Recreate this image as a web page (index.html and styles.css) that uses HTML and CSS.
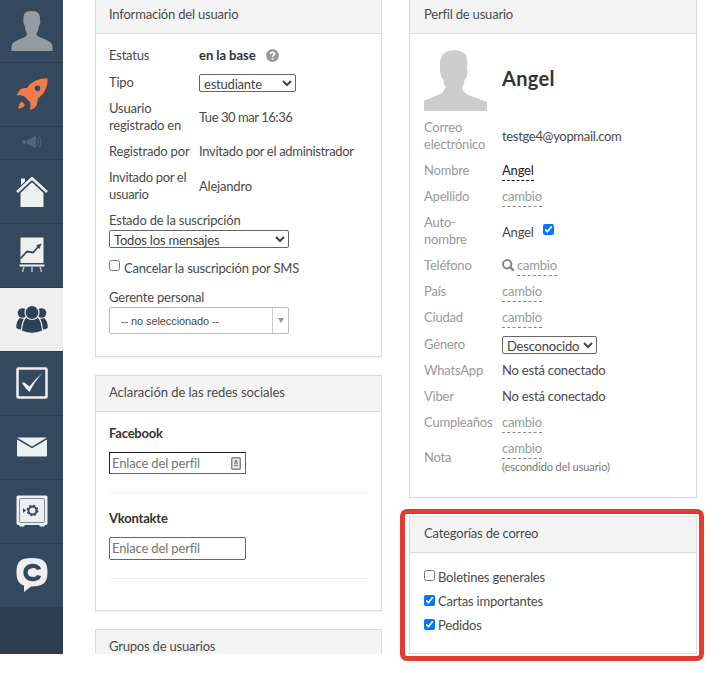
FILE: index.html
```html
<!DOCTYPE html>
<html lang="es">
<head>
<meta charset="utf-8">
<title>Perfil de usuario</title>
<link rel="stylesheet" href="styles.css">
</head>
<body>
<div class="page">
  <nav class="sidebar">
    <a class="item item-user"><svg width="42" height="42" viewBox="0 0 42 42"><path fill="#959ba2" d="M0.500 41V36C2 30 10 29.500 14 27C17 25 16 23 14.500 20.500L13.500 15C12 13 12 11 12.500 10C12 4 14 1 20 1C27 .5 29.500 4 29 10C30 12 29 14 28 16L27 21C25 24 25 25 28 27C33 29.500 40 30 41.500 36V41Z"/></svg></a>
    <a class="item item-rocket"><svg width="32" height="32" viewBox="0 0 32 32"><path fill="#f27c49" fill-rule="evenodd" d="M31.500.5C24 .2 16 2.500 11 10C7 9.500 4.500 10.500 3 13L.5 17.500C4 17 6 17 8.500 18.500L14 24C14.800 26 14.500 28 14 32C18 31 20.500 29 21 26L22 20.500C28.500 15.500 32 9 31.500.5ZM21.500 7.500a2.800 2.800 0 1 1 0 5.600a2.800 2.800 0 1 1 0-5.600Z"/><path fill="#f27c49" d="M6 23.500C3.500 25 2.500 27.500 2 30.500C5 30.500 7.500 29.500 9 27Z"/></svg></a>
    <a class="item item-horn"><svg width="22" height="14" viewBox="0 0 22 14"><g fill="#4f6780"><circle cx="3" cy="7" r="2"/><path d="M5.500 5.200 15 .8V13.200L5.500 8.800Z"/></g><path d="M16.500 3.500Q18.500 7 16.500 10.500M18.500 1.500Q21.500 7 18.500 12.500" fill="none" stroke="#4f6780"/></svg></a>
    <a class="item item-home"><svg width="32" height="32" viewBox="0 0 32 32"><path fill="#ecf0f1" d="M5 2.500H9V6L5 9.500ZM16 6.200 27.500 17V31H4.500V17Z"/><path d="M1 16 16 2.300 31 16" fill="none" stroke="#34495e" stroke-width="4.600"/><path d="M1 16 16 2.300 31 16" fill="none" stroke="#ecf0f1" stroke-width="2.600"/></svg></a>
    <a class="item"><svg width="26" height="36" viewBox="0 0 26 36"><path fill="#ecf0f1" d="M1.500.5H24.500V26H1.500ZM.5 27.500H25.500V29.500H.5Z"/><path d="M5 29.500 3.500 35M13 29.500V35M21 29.500 22.500 35" stroke="#aebbc6" stroke-width="1.500"/><path d="M1.500 21.500 8 14.500 14 15.500 20 9" fill="none" stroke="#34495e" stroke-width="1.800"/><path fill="#34495e" d="M17 8.500 22.500 6.500 20.500 12Z"/></svg></a>
    <a class="item item-active"><svg width="32" height="30" viewBox="0 0 32 30"><g fill="#2e4155"><circle cx="6.500" cy="9" r="4.800"/><circle cx="25.500" cy="9" r="4.800"/><path d="M4 14Q0 17 .3 24Q3 26 7 25.500L9 15Q6 15 4 14ZM28 14Q32 17 31.700 24Q29 26 25 25.500L23 15Q26 15 28 14Z"/></g><g fill="#2e4155" stroke="#efefef" stroke-width="1.200"><path d="M10 13Q16 17 22 13Q26 17 26.500 27Q16 31.500 5.500 27Q6 17 10 13Z"/><circle cx="16" cy="8.500" r="7"/></g></svg></a>
    <a class="item"><svg width="32" height="32" viewBox="0 0 32 32"><rect x="1.500" y="1.500" width="29" height="29" rx="1" fill="none" stroke="#ecf0f1" stroke-width="2.500"/><path fill="#ecf0f1" d="M6 16 8 15.300 13.500 19.500Q19 12 26.500 6Q19 14 13.500 25Q9 21 6 16Z"/></svg></a>
    <a class="item"><svg width="32" height="20" viewBox="0 0 32 20"><rect x="1" y=".5" width="30" height="19" rx="1" fill="#ecf0f1"/><path d="M1 1.500 16 10.500 31 1.500" fill="none" stroke="#34495e" stroke-width="1.500"/></svg></a>
    <a class="item"><svg width="32" height="32" viewBox="0 0 32 32"><path fill="#ecf0f1" d="M2 .5H30Q31.500.5 31.500 2V28.500Q31.500 30 29 30L28 31.500H24L23 30H9L8 31.500H4L3 30Q.5 30 .5 28.500V2Q.5.5 2 .5Z"/><rect x="3.500" y="3.500" width="25" height="24" rx="1.500" fill="none" stroke="#7c8b9a"/><circle cx="16.500" cy="15.500" r="4" fill="none" stroke="#34495e" stroke-width="2"/><circle cx="16.500" cy="15.500" r="5.300" fill="none" stroke="#34495e" stroke-width="1.200" stroke-dasharray="2.080"/><path fill="#34495e" d="M7 13 10 15.500 7 18Z"/></svg></a>
    <a class="item item-chat"><svg width="32" height="36" viewBox="0 0 32 36"><path fill="#efefef" d="M15.500 1C27 1 31.500 4 31.500 15S27 29.500 15 29.500L8 35V28.500C2 26.500.5 22 .5 15C.5 4 5 1 15.500 1Z"/><path d="M23 12.500C22 7.500 9.500 7 9.500 15.500S22 23.500 23 18.500" fill="none" stroke="#34495e" stroke-width="4.400"/></svg></a>
  </nav>

  <main class="columns">
    <section class="column">
      <article class="card card-info">
        <h2 class="card-head">Información del usuario</h2>
        <div class="card-body">
          <div class="row"><span>Estatus</span><span class="status"><b>en la base</b><svg width="13" height="13" viewBox="0 0 13 13"><circle cx="6.500" cy="6.500" r="6.500" fill="#999"/><path d="M4.500 5C4.500 2.600 8.500 2.700 8.500 4.900C8.500 6.300 6.600 6.200 6.600 7.800M6.600 9V10.600" fill="none" stroke="#fff" stroke-width="1.700"/></svg></span></div>
          <div class="row row-field"><span>Tipo</span><select class="select-type"><option>estudiante</option></select></div>
          <div class="row row-double"><span>Usuario<br>registrado en</span><span class="date">Tue 30 mar 16:36</span></div>
          <div class="row"><span>Registrado por</span><span class="tight">Invitado por el administrador</span></div>
          <div class="row row-double"><span class="tight">Invitado por el<br>usuario</span><span>Alejandro</span></div>
          <label class="field-label">Estado de la suscripción</label>
          <select class="select-sub"><option>Todos los mensajes</option></select>
          <label class="check check-sms"><input type="checkbox"><span>Cancelar la suscripción por SMS</span></label>
          <label class="field-label">Gerente personal</label>
          <div class="combo"><span class="combo-value">-- no seleccionado --</span><span class="combo-arrow"><i></i></span></div>
        </div>
      </article>

      <article class="card card-social">
        <h2 class="card-head loose">Aclaración de las redes sociales</h2>
        <div class="card-body">
          <div class="social">
            <b>Facebook</b>
            <div class="input-wrap"><input class="input input-focus" placeholder="Enlace del perfil"><svg class="contact" width="10" height="13" viewBox="0 0 10 13"><rect x=".75" y=".75" width="8.500" height="11.500" rx="1" fill="#eee" stroke="#888" stroke-width="1.500"/><circle cx="5" cy="4" r="1.200" fill="#777"/><path d="M3 6H7M3 8.500H7" stroke="#888" stroke-width="1.500"/></svg></div>
          </div>
          <div class="social social-second">
            <b>Vkontakte</b>
            <div class="input-wrap"><input class="input input-tall" placeholder="Enlace del perfil"></div>
          </div>
        </div>
      </article>

      <article class="card">
        <h2 class="card-head">Grupos de usuarios</h2>
      </article>
    </section>

    <section class="column">
      <article class="card card-profile">
        <h2 class="card-head">Perfil de usuario</h2>
        <div class="card-body">
          <div class="row row-person"><svg width="63" height="61" viewBox="0 0 63 61"><path fill="#ccc" d="M0 61V50.500C7 48 13 45.500 18 43C20 40 21 39 22 37C20 35 19.800 33 19.500 30C17 28 16 24 16 19C15 6 19 .3 31 .2C36 .2 38 1.500 40 3.500C43 4 43.500 9 43 19C44.500 22 43 28 40.500 30C40 34 39.500 36 38 38C39 41 41 43 43 44.500C49 47 56 49 63 52V61Z"/></svg><h1 class="person">Angel</h1></div>
          <div class="row row-double"><span>Correo<br>electrónico</span><span class="mail">testge4@yopmail.com</span></div>
          <div class="row"><span>Nombre</span><span><a class="edit edit-set">Angel</a></span></div>
          <div class="row"><span>Apellido</span><span><a class="edit">cambio</a></span></div>
          <div class="row row-double"><span>Auto-<br>nombre</span><span class="auto"><span>Angel</span><input type="checkbox" checked></span></div>
          <div class="row"><span>Teléfono</span><span class="phone"><svg width="13" height="13" viewBox="0 0 13 13"><circle cx="5.200" cy="5.200" r="4.200" fill="none" stroke="#888" stroke-width="2"/><path d="M8.300 8.300 11.700 11.700" stroke="#888" stroke-width="2.400"/></svg><a class="edit">cambio</a></span></div>
          <div class="row"><span>País</span><span><a class="edit">cambio</a></span></div>
          <div class="row"><span>Ciudad</span><span><a class="edit">cambio</a></span></div>
          <div class="row row-field"><span>Género</span><select class="select-gender"><option>Desconocido</option></select></div>
          <div class="row"><span>WhatsApp</span><span>No está conectado</span></div>
          <div class="row"><span>Viber</span><span>No está conectado</span></div>
          <div class="row"><span>Cumpleaños</span><span><a class="edit">cambio</a></span></div>
          <div class="row row-double"><span>Nota</span><span><a class="edit">cambio</a><br><small>(escondido del usuario)</small></span></div>
        </div>
      </article>

      <article class="card card-mail">
        <h2 class="card-head">Categorías de correo</h2>
        <div class="card-body">
          <label class="check"><input type="checkbox"><span>Boletines generales</span></label>
          <label class="check"><input type="checkbox" checked><span>Cartas importantes</span></label>
          <label class="check"><input type="checkbox" checked><span>Pedidos</span></label>
        </div>
      </article>
    </section>
  </main>
</div>
<div class="highlight"></div>
</body>
</html>
```
FILE: styles.css
```css
* { box-sizing: border-box; }

body {
  position: relative;
  height: 673px;
  margin: 0;
  overflow: hidden;
  background: #fff;
  color: #4a4a4a;
  font: 13px/17px Lato, "Liberation Sans", sans-serif;
  letter-spacing: -.2px;
}

.page { display: flex; height: 654px; overflow: hidden; }

.sidebar { flex: 0 0 63px; height: 654px; background: #2e3e50; }
.item {
  display: flex;
  align-items: center;
  justify-content: center;
  height: 64px;
  padding: 0 0 1px;
  background: #34495e;
  border-bottom: 1px solid #2b3c52;
}
.item-user { height: 63px; }
.item-horn { height: 33px; padding-bottom: 3px; }
.item-home { padding: 1px 0 0; }
.item-active { background: #efefef; }
.item-chat { height: 63px; border: 0; }

.columns { display: flex; gap: 27px; padding-left: 32px; }
.column { display: flex; flex-direction: column; gap: 18px; width: 287px; }
.column + .column { width: 288px; }

.card {
  flex: none;
  border: 1px solid #dcdcdc;
  background: #fff;
  box-shadow: 0 1px 1px rgba(0, 0, 0, .05);
}
.card-head {
  height: 36px;
  margin: 0;
  padding: 8px 13px;
  border-bottom: 1px solid #dcdcdc;
  background: #f4f4f4;
  font-size: 13px;
  font-weight: 400;
  line-height: 17px;
}
.loose { letter-spacing: -.05px; }
.tight, .mail { letter-spacing: -.32px; }
.date { letter-spacing: -.45px; }
.card-body { padding: 9px 13px; }
.card-info, .card-profile { margin-top: -3px; }
.card-info { height: 360px; }
.card-social { height: 236px; }
.card-profile { height: 501px; }
.card-mail { height: 138px; }
.column + .column .card-head, .column + .column .card-body { padding-left: 14px; }

.row { display: grid; grid-template-columns: 90px 1fr; align-items: center; height: 26px; white-space: nowrap; }
.row > span { padding-bottom: 1px; }
.row-field { height: 27px; }
.row-double { height: 43px; }
.status { display: flex; align-items: center; gap: 10px; letter-spacing: -.05px; }
.status svg { margin-top: -1px; }
b { color: #333; font-weight: 700; }

select {
  height: 18px;
  padding: 0;
  border: 1px solid #666;
  border-radius: 2px;
  background: #fff;
  color: #444;
  font: 13px/16px Lato, sans-serif;
  letter-spacing: -.2px;
}
.select-type { width: 97px; }
.select-sub { display: block; width: 180px; }
.select-gender { width: 95px; }

.field-label { display: block; padding-top: 4px; height: 22px; }
.check { display: flex; gap: 3px; height: 24px; }
.check input { width: 11px; height: 11px; margin: 0; }
.check input:checked { margin-top: 1px; }
.check span { margin-top: -1px; }
.check-sms { gap: 4px; height: 37px; padding-top: 12px; }
.check-sms span { margin-top: 0; }

.combo { display: flex; width: 180px; height: 27px; border: 1px solid #bbb; border-radius: 2px; }
.combo-value { flex: 1; padding-left: 11px; font: 11px/27px "Liberation Sans", sans-serif; letter-spacing: -.1px; }
.combo-arrow { display: grid; place-items: center; width: 16px; border-left: 1px solid #ccc; }
.combo-arrow i { border: 3px solid transparent; border-top: 5px solid #999; border-bottom: 0; }

.card-social .card-body { padding-top: 0; }
.social { height: 81px; padding-top: 13px; border-bottom: 1px solid #eee; }
.social-second { height: 86px; padding-top: 17px; }
.input-wrap { position: relative; width: 137px; margin-top: 10px; }
.input {
  display: block;
  width: 137px;
  height: 22px;
  padding: 0 2px 1px;
  border: 1px solid #666;
  border-radius: 2px;
  font: 13px/17px Lato, sans-serif;
  letter-spacing: -.15px;
}
.input-tall { height: 23px; }
.input-focus { border-color: #222 #666 #666 #222; border-radius: 0; }
.contact { position: absolute; right: 5px; top: 5px; }

.card-profile .row { grid-template-columns: 78px 1fr; }
.card-profile .row > span:first-child { color: #999; }
.card-profile .row-person { height: 72px; align-items: start; padding-top: 7px; }
.person { margin: 16px 0 0; color: #333; font-size: 20px; line-height: 24px; letter-spacing: .3px; }
.edit { display: inline-block; line-height: 17px; padding-bottom: 1px; margin-bottom: -1px; border-bottom: 1px dashed #888; color: #999; }
.edit-set { border-color: #111; color: #222; }
.auto { display: flex; gap: 9px; }
.auto span { padding-top: 2px; }
.auto input { width: 11px; height: 11px; margin: 2px 0 0; }
.phone { display: flex; align-items: center; gap: 2px; }
small { color: #777; font-size: 11px; letter-spacing: -.1px; }
.card-mail .card-body { padding-top: 17px; }

.highlight {
  position: absolute;
  left: 400px;
  top: 509px;
  width: 304px;
  height: 152px;
  border: 5px solid #e53a30;
  border-radius: 7px;
}
```
